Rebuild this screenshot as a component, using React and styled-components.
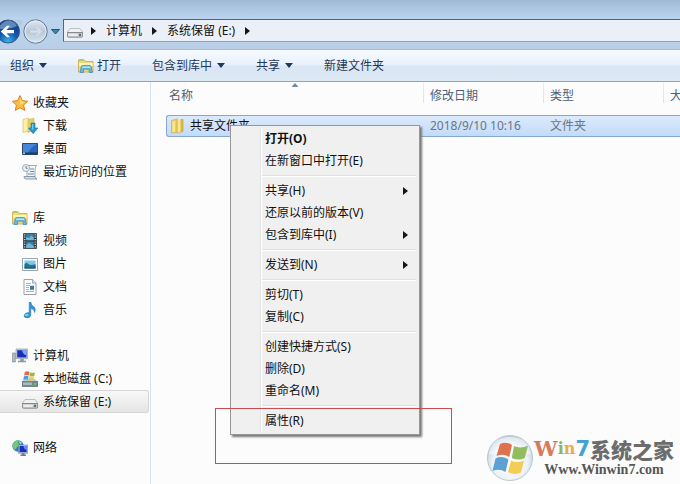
import React from "react";
import styled, { createGlobalStyle, css } from "styled-components";

const Global = createGlobalStyle`
  * { box-sizing: border-box; }
  body {
    margin: 0;
    overflow: hidden;
    background: #fcfcfc;
    font-family: "Noto Sans", "Noto Sans CJK SC", sans-serif;
    font-size: 12px;
    line-height: 20px;
    color: #111;
  }
  button {
    font: inherit;
    color: inherit;
    border: 0;
    padding: 0;
    background: none;
    white-space: nowrap;
  }
  svg { display: block; flex: none; }
`;

const Window = styled.div`
  position: relative;
  display: flex;
  flex-direction: column;
  min-height: 100vh;
  overflow: hidden;
`;

const Frame = styled.header`
  display: flex;
  height: 50px;
  padding-top: 19px;
  background: linear-gradient(#9fb9d5 0, #bbd3ed 18px, #bad1ea 40px, #b9cee6 50px);
  border-bottom: 1px solid #a9bfd7;
`;

const NavButtons = styled.div`
  display: flex;
  width: 63px;
  height: 25px;
`;

const NavButton = styled.button`
  display: block;
  width: ${(p) => p.$width}px;
  height: 25px;
`;

const AddressBar = styled.nav`
  display: flex;
  align-items: center;
  flex: 1;
  height: 23px;
  padding-left: 3px;
  gap: 8px;
  background: #ebf0f8;
  border: solid #506580;
  border-width: 1px 0 1px 1px;
  border-bottom-color: #8ba3bf;
`;

const Crumbs = styled.div`
  display: flex;
  align-items: center;
  gap: 10px;
`;

const Toolbar = styled.div`
  display: flex;
  align-items: center;
  height: 32px;
  padding-left: 10px;
  gap: 31px;
  color: #1e395b;
  background: linear-gradient(#f6faff 0, #e8f1fb 15px, #dbe6f4 16px, #dde8f5 31px);
  border-bottom: 1px solid #90a5bd;
`;

const ToolButton = styled.button`
  display: flex;
  align-items: center;
  gap: ${(p) => (p.$icon ? 3 : 5)}px;
`;

const Body = styled.div`
  display: flex;
  flex: 1;
`;

const Sidebar = styled.nav`
  display: flex;
  flex-direction: column;
  gap: 23px;
  width: 151px;
  padding: 9px 1px 0 0;
  border-right: 1px solid #d9e1f4;
`;

const Group = styled.div`
  display: flex;
  flex-direction: column;
`;

const TreeLink = styled.a`
  display: flex;
  align-items: center;
  gap: 5px;
  height: 23px;
  padding-left: ${(p) => (p.$child ? 22 : 12)}px;
  color: #111;
  text-decoration: none;
  white-space: nowrap;
  border: 1px solid transparent;
  border-left: 0;
  border-radius: 0 3px 3px 0;
  ${(p) =>
    p.$current &&
    css`
      background: linear-gradient(#f8f8f8, #e5e5e5);
      border-color: #d5d5d5;
    `}
`;

const Main = styled.main`
  flex: 1;
  min-width: 0;
  padding-left: 15px;
`;

const FileTable = styled.table`
  width: 100%;
  table-layout: fixed;
  border-collapse: separate;
  border-spacing: 0;
`;

const HeadCell = styled.th`
  position: relative;
  width: ${(p) => (p.$width ? `${p.$width}px` : "auto")};
  height: 33px;
  padding: 4px 0 0 ${(p) => (p.$first ? 3 : 6)}px;
  vertical-align: top;
  text-align: left;
  font-weight: 400;
  color: #4c607a;
  white-space: nowrap;
  overflow: hidden;
  background: ${(p) =>
    p.$width ? "linear-gradient(#e8eef6, #d8e4f3) right top / 1px 21px no-repeat" : "none"};
`;

const SortMark = styled.svg`
  position: absolute;
  top: 1px;
  left: 50%;
  transform: translateX(-50%);
`;

const Cell = styled.td`
  height: 22px;
  padding: 0 0 0 ${(p) => (p.$first ? 3 : 6)}px;
  line-height: 20px;
  color: ${(p) => (p.$first ? "#111" : "#6c7580")};
  white-space: nowrap;
  background: linear-gradient(#dceafc, #c2dbfb);
  border: solid #86a7cf;
  border-width: 1px 0;
  ${(p) =>
    p.$first &&
    css`
      border-left-width: 1px;
      border-radius: 3px 0 0 3px;
    `}
`;

const FileName = styled.div`
  display: flex;
  align-items: center;
  gap: 4px;
`;

const Menu = styled.div`
  position: absolute;
  left: 230px;
  top: 125px;
  width: 190px;
  padding: 2px;
  background: linear-gradient(to right, #e2e3e3 1px, #fff 1px) 29px 2px / 2px calc(100% - 4px) no-repeat
    #f0f0f0;
  border: 1px solid #979797;
  box-shadow: 2px 2px 2px #777;
`;

const MenuItem = styled.button`
  display: flex;
  align-items: center;
  justify-content: space-between;
  width: 100%;
  height: 22px;
  padding: 0 9px 0 32px;
  font-weight: ${(p) => (p.$default ? 700 : 400)};
`;

const MenuRule = styled.hr`
  height: 2px;
  margin: 3px 1px 3px 29px;
  border: 0;
  border-top: 1px solid #e0e0e0;
  background: #fff;
`;

const Highlight = styled.div`
  position: absolute;
  left: 215px;
  top: 408px;
  width: 237px;
  height: 56px;
  border: 1px solid #cb4a50;
`;

const Watermark = styled.div`
  position: absolute;
  right: 6px;
  bottom: 2px;
  display: flex;
  align-items: center;
`;

const Brand = styled.div`
  display: flex;
  flex-direction: column;
  align-items: center;
`;

const BrandName = styled.div`
  display: flex;
  align-items: center;
  height: 24px;
  font: 900 21px/24px "Noto Sans CJK SC", sans-serif;
  color: #6c6c6c;
`;

const Letter = styled.span`
  font-family: ${(p) => (p.$sans ? '"DejaVu Sans"' : '"DejaVu Serif"')}, serif;
  font-size: ${(p) => p.$size}px;
  font-weight: 700;
  color: ${(p) => p.$color};
`;

const BrandSite = styled.div`
  font: 700 14px/18px "Liberation Serif", serif;
  color: #565656;
`;

const Right = () => (
  <svg width="5" height="8" viewBox="0 0 5 8"><path d="M0 0l5 4-5 4z" fill="#161616" /></svg>
);
const Down = () => (
  <svg width="8" height="5" viewBox="0 0 8 5"><path d="M0 0h8L4 5z" fill="#1e395b" /></svg>
);

const Icon = ({ children, size = 16 }) => (
  <svg width={size} height={size} viewBox="0 0 16 16" aria-hidden="true">{children}</svg>
);

const Drive = () => (
  <Icon>
    <path d="M3 5.500h10l3 4H0z" fill="#f1f1ef" stroke="#a6a8a8" strokeWidth=".7" />
    <path d="M.4 9.500h15.200v3.700q0 1-1 1H1.400q-1 0-1-1z" fill="#c9cbcb" stroke="#777b7e" strokeWidth=".8" />
    <path d="M1.500 10.800h9v2.300h-9z" fill="#eceded" />
    <path d="M12 10.800h2v2.200h-2z" fill="#59705c" />
  </Icon>
);

const WinFlag = () => (
  <>
    <path d="M1 2q3-2 6 0L6.200 6.500Q3.500 5 .2 6.500z" fill="#e5683c" />
    <path d="M7.700 2.300q3 1.700 6.300 0L13 7q-3 1.500-6 0z" fill="#8dbd42" />
    <path d="M0 7.500q3-1.500 6 0L5 12q-3-1.500-6 0z" fill="#4d9be0" />
    <path d="M6.800 8q3 1.500 6 0L12 12.500q-3 1.500-6 0z" fill="#f5c53c" />
  </>
);

const SystemDrive = () => (
  <Icon>
    <path d="M2 8h11l3 3H0z" fill="#bccdd1" />
    <path d="M0 10.500h16V15q0 .7-.7.700H.7Q0 15.700 0 15z" fill="#6f8b94" stroke="#526b74" strokeWidth=".6" />
    <path d="M1 11.500h9v2.500H1z" fill="#a5bbc0" />
    <path d="M12 12h2v2h-2z" fill="#65cf3c" />
    <g transform="translate(2 -.5) scale(.78)"><WinFlag /></g>
  </Icon>
);

const Star = () => (
  <Icon>
    <path d="M8 .6l2.300 5 5.300.7-4 3.700 1.100 5.400L8 12.800l-4.700 2.600 1.100-5.400-4-3.700 5.300-.7z" fill="#fbbd3a" stroke="#d9812a" strokeLinejoin="round" />
    <path d="M8 2.800l1.500 3.700 3.800.6-5.300 3z" fill="#ffe27d" />
  </Icon>
);

const Folder = () => (
  <Icon>
    <path d="M1.500 2.500L7.500.8v13.500l-6 .7z" fill="#edcd62" stroke="#c9a640" strokeWidth=".6" />
    <path d="M7 2.500l6-1.200v12L7 15z" fill="#dfb843" stroke="#c19b38" strokeWidth=".6" />
    <path d="M7.500 1.500l3-.8v12.800L7.500 15z" fill="#fbe99a" />
    <path d="M2.500 3.500l2.500-.7v11l-2.500.5z" fill="#f9e792" />
  </Icon>
);

const Downloads = () => (
  <Icon>
    <path d="M1 1.500L6.500 0v13L1 14.500z" fill="#fbf0a6" stroke="#d0b650" strokeWidth=".6" />
    <path d="M6 1.500l6-1v12L6 14.500z" fill="#e8d069" stroke="#c9b04b" strokeWidth=".6" />
    <path d="M9 5h4v5h2.800l-4.600 5.700L6.500 10H9z" fill="#2596cf" stroke="#1673aa" strokeWidth=".6" />
    <path d="M10 6h1.300v6L9 10.700h1z" fill="#6cd1f1" />
  </Icon>
);

const Desktop = () => (
  <Icon>
    <path d="M.5 2.500h15v11H.5z" fill="#2867bd" stroke="#304762" />
    <path d="M1 3h14q-6 3-9 9H1z" fill="#4386dc" />
    <path d="M1 11.500h14V13H1z" fill="#1b3b68" />
    <path d="M1 11.500h2V13H1z" fill="#85d3f3" />
  </Icon>
);

const Recent = () => (
  <Icon>
    <path d="M5 1.500h9.500q-1.500 2-1.500 5v6H5z" fill="#f1f5f9" stroke="#8797a8" strokeWidth=".8" />
    <path d="M2 12.500h11q0 2.500 2 2.500H4q-2 0-2-2.500z" fill="#d5dfe8" stroke="#788a9d" strokeWidth=".8" />
    <path d="M8 5h4M8 7.500h4M6 10h6" stroke="#78899e" />
    <circle cx="4" cy="4" r="3.500" fill="#edf1f4" stroke="#8b97a3" strokeWidth=".8" />
    <path d="M4 2v2.300h1.700" fill="none" stroke="#506577" strokeWidth=".8" />
  </Icon>
);

const Library = () => (
  <Icon>
    <path d="M.5 2h6l1 1.500h7.500V14H.5z" fill="#f1db78" stroke="#c5a748" strokeWidth=".8" />
    <path d="M1 1h4.500v2H1z" fill="#a6cf65" />
    <path d="M1.200 5h13.500v3H1.200z" fill="#fff5b8" />
    <path d="M2 14.500l1.300-6q.2-1 1.200-1h7.300q1 0 1.200 1l1.500 6h-3.300v-3.300H5.500v3.300z" fill="#66b8e3" stroke="#3b86b7" strokeWidth=".7" />
    <path d="M4.500 8.500h7.500l.5 1.500H4z" fill="#b5e5f7" />
  </Icon>
);

const Video = () => (
  <Icon>
    <path d="M1.500.5h13v15h-13z" fill="#26333c" stroke="#1b252b" strokeWidth=".6" />
    <path d="M4.200 1h7.600v6.300H4.200zM4.200 8.500h7.600V15H4.200z" fill="#3780a9" />
    <path d="M4.200 7.300V4l3 1 2-2.500 2.600 2v2.800zM4.200 15v-3l3-2 4.600 3v2z" fill="#73b5d0" />
    <path d="M2.800 1.200v14M13.200 1.200v14" stroke="#eef3f5" strokeWidth="1.200" strokeDasharray="1.200 1.200" />
  </Icon>
);

const Picture = () => (
  <Icon>
    <path d="M.5 2.500h15v12H.5z" fill="#fff" stroke="#818e98" strokeWidth=".8" />
    <path d="M2.500 4.500h11v8h-11z" fill="#7fc7ea" />
    <path d="M2.500 8q2-2 4 0t7 0v4.500h-11z" fill="#28777a" />
    <path d="M2.500 10.500q5 1.500 11-.5v2.500h-11z" fill="#225aa0" />
  </Icon>
);

const Doc = () => (
  <Icon>
    <path d="M2 .5h8.500L14 4v11.500H2z" fill="#fff" stroke="#7d8c9d" strokeWidth=".8" />
    <path d="M10.500.5V4H14" fill="#dfe7ef" stroke="#7d8c9d" strokeWidth=".7" />
    <path d="M4 4.500h5M4 6.500h4M4 8.500h3M4 10.500h3M4 12.500h8" stroke="#8ca0b5" strokeWidth=".8" />
    <path d="M8 6.800h4v4H8z" fill="#327ca9" />
  </Icon>
);

const Music = () => (
  <Icon>
    <path d="M7.200 0h1.600q.3 3.500 3 4.800 2.600 2 .8 5.700 0-3.300-3.800-4V13q-.5 2.800-3.600 3-3.500-.2-3-2.600.7-3 5-2.800z" fill="#3494cf" stroke="#216fa6" strokeWidth=".5" />
    <ellipse cx="4.700" cy="13" rx="1.800" ry="1.200" fill="#78cff0" />
  </Icon>
);

const Computer = () => (
  <Icon>
    <path d="M.3 5h3v9h-3z" fill="#b3bcc2" stroke="#707e88" strokeWidth=".6" />
    <path d="M4 1h11.700v9.700H4z" fill="#d1d8df" stroke="#7d8790" strokeWidth=".6" />
    <path d="M5.200 2.200h9.300v7.300H5.200z" fill="#172fc0" />
    <path d="M10 2.200h4.500v5q-3.500-.5-4.500-5z" fill="#80a9f4" />
    <path d="M8.300 10.700h3.400v2H14v1.500H6v-1.500h2.300z" fill="#8c989f" />
  </Icon>
);

const Network = () => (
  <Icon>
    <circle cx="6" cy="6" r="5.700" fill="#2b82c8" />
    <path d="M2 2.500q3-3 5-2L6 3l2 2-3 2-2 3Q0 8 1 4z" fill="#74cb67" />
    <path d="M7 1l3 2-2 1z" fill="#c0f1f4" />
    <path d="M6.500 5h9.200v8.300H6.500z" fill="#c4ced9" stroke="#687a8e" strokeWidth=".6" />
    <path d="M7.500 6h7.200v6.200H7.500z" fill="#1b31bb" />
    <path d="M11.500 6h3.200v4q-3-.5-3.200-4z" fill="#6b8eea" />
    <path d="M10 13.300h2.500v1.200H14V16H8.500v-1.500H10z" fill="#697b8c" />
  </Icon>
);

const Back = () => (
  <svg width="22" height="25" viewBox="0 0 22 25">
    <defs>
      <radialGradient id="back" cx=".5" cy=".95" r=".85">
        <stop offset="0" stopColor="#35b8ef" />
        <stop offset=".5" stopColor="#1558b0" />
        <stop offset="1" stopColor="#123b83" />
      </radialGradient>
    </defs>
    <path d="M8 1h14v4q-4 3-8 0z" fill="#a9bfd6" opacity=".5" />
    <circle cx="8" cy="12.500" r="11.500" fill="url(#back)" stroke="#35587f" />
    <path d="M-1 8q4-6 9-6.500 6 0 9 5.500-5 3-18 3z" fill="#a2c3e8" opacity=".55" />
    <path d="M.8 12.500L7 6.800h3L6.500 11H14v3.200H6.500l3.500 4H7z" fill="#fff" />
  </svg>
);

const Forward = () => (
  <svg width="27" height="25" viewBox="0 0 27 25">
    <defs>
      <linearGradient id="fwd" x2="0" y2="1">
        <stop offset="0" stopColor="#e0e8f1" />
        <stop offset=".5" stopColor="#b9c8d8" />
        <stop offset="1" stopColor="#d7e4f0" />
      </linearGradient>
    </defs>
    <circle cx="13.500" cy="12.500" r="11.700" fill="url(#fwd)" stroke="#60758f" />
    <circle cx="13.500" cy="12.500" r="10.500" fill="none" stroke="#e7eef6" />
    <path d="M20.500 12.500L15 7.200h-2.500l3 3.800H8v3h7.500l-3 3.800H15z" fill="#d5dfe9" stroke="#b4c2d1" strokeWidth=".4" />
  </svg>
);

const History = () => (
  <svg width="14" height="25" viewBox="0 0 14 25">
    <path d="M2.500 10.500h8L6.500 15z" fill="#3a87b2" stroke="#24516f" />
  </svg>
);

const Orb = () => (
  <svg width="48" height="48" viewBox="0 0 48 48" aria-hidden="true">
    <defs>
      <radialGradient id="orb" cx=".5" cy=".6" r=".6">
        <stop offset="0" stopColor="#fff" />
        <stop offset=".65" stopColor="#edf2f5" />
        <stop offset="1" stopColor="#b4c9d9" />
      </radialGradient>
    </defs>
    <circle cx="24" cy="24" r="22.500" fill="url(#orb)" stroke="#b9c8d3" />
    <path d="M3 21Q5 3 24 3t21 18q-19-7-42 0z" fill="#fff" opacity=".5" />
    <path d="M14 10q6-3 12 1l-2.700 12q-6-4-12.800-1z" fill="#de724f" />
    <path d="M28 12q6 3 14-.2l-3.200 12.200q-6.500 3-13 0z" fill="#93bc61" />
    <path d="M9.500 24.500q6-3.200 13 1l-3 12.500q-6-4-13-1z" fill="#5da1d4" />
    <path d="M25 26.500q6 3 13 0l-3 12q-6.500 3-13-.5z" fill="#f4cd57" />
  </svg>
);

const places = [
  [["收藏夹", Star], ["下载", Downloads], ["桌面", Desktop], ["最近访问的位置", Recent]],
  [["库", Library], ["视频", Video], ["图片", Picture], ["文档", Doc], ["音乐", Music]],
  [["计算机", Computer], ["本地磁盘 (C:)", SystemDrive], ["系统保留 (E:)", Drive]],
  [["网络", Network]],
];

const menu = [
  [["打开(O)"], ["在新窗口中打开(E)"]],
  [["共享(H)", true], ["还原以前的版本(V)"], ["包含到库中(I)", true]],
  [["发送到(N)", true]],
  [["剪切(T)"], ["复制(C)"]],
  [["创建快捷方式(S)"], ["删除(D)"], ["重命名(M)"]],
  [["属性(R)"]],
];

export default function App() {
  return (
    <Window>
      <Global />
      <Frame>
        <NavButtons>
          <NavButton $width={22} aria-label="后退"><Back /></NavButton>
          <NavButton $width={27} aria-label="前进"><Forward /></NavButton>
          <NavButton $width={14} aria-label="历史记录"><History /></NavButton>
        </NavButtons>
        <AddressBar aria-label="地址">
          <Drive />
          <Crumbs>
            <Right />
            <button>计算机</button>
            <Right />
            <button>系统保留 (E:)</button>
            <Right />
          </Crumbs>
        </AddressBar>
      </Frame>
      <Toolbar>
        <ToolButton>组织<Down /></ToolButton>
        <ToolButton $icon><Library />打开</ToolButton>
        <ToolButton>包含到库中<Down /></ToolButton>
        <ToolButton>共享<Down /></ToolButton>
        <ToolButton>新建文件夹</ToolButton>
      </Toolbar>
      <Body>
        <Sidebar aria-label="导航">
          {places.map((group) => (
            <Group key={group[0][0]}>
              {group.map(([label, Glyph], i) => (
                <TreeLink key={label} href="#" $child={i > 0} $current={Glyph === Drive}>
                  <Glyph />
                  {label}
                </TreeLink>
              ))}
            </Group>
          ))}
        </Sidebar>
        <Main>
          <FileTable>
            <thead>
              <tr>
                <HeadCell $first $width={258}>
                  名称
                  <SortMark width="7" height="4" viewBox="0 0 7 4">
                    <path d="M0 4l3.500-4L7 4z" fill="#6f8ba8" />
                  </SortMark>
                </HeadCell>
                <HeadCell $width={120}>修改日期</HeadCell>
                <HeadCell $width={120}>类型</HeadCell>
                <HeadCell>大小</HeadCell>
              </tr>
            </thead>
            <tbody>
              <tr>
                <Cell $first><FileName><Folder />共享文件夹</FileName></Cell>
                <Cell>2018/9/10 10:16</Cell>
                <Cell>文件夹</Cell>
                <Cell />
              </tr>
            </tbody>
          </FileTable>
        </Main>
      </Body>
      <Menu role="menu">
        {menu.map((section, s) => (
          <React.Fragment key={section[0][0]}>
            {s > 0 && <MenuRule />}
            {section.map(([label, sub], i) => (
              <MenuItem key={label} role="menuitem" $default={s === 0 && i === 0}>
                {label}
                {sub && <Right />}
              </MenuItem>
            ))}
          </React.Fragment>
        ))}
      </Menu>
      <Highlight />
      <Watermark>
        <Orb />
        <Brand>
          <BrandName>
            <Letter $color="#d9795c" $size={21}>W</Letter>
            <Letter $color="#8bb75d" $size={16}>i</Letter>
            <Letter $color="#eda94d" $size={16}>n</Letter>
            <Letter $color="#43a2d2" $size={21} $sans>7</Letter>
            系统之家
          </BrandName>
          <BrandSite>Www.Winwin7.com</BrandSite>
        </Brand>
      </Watermark>
    </Window>
  );
}
